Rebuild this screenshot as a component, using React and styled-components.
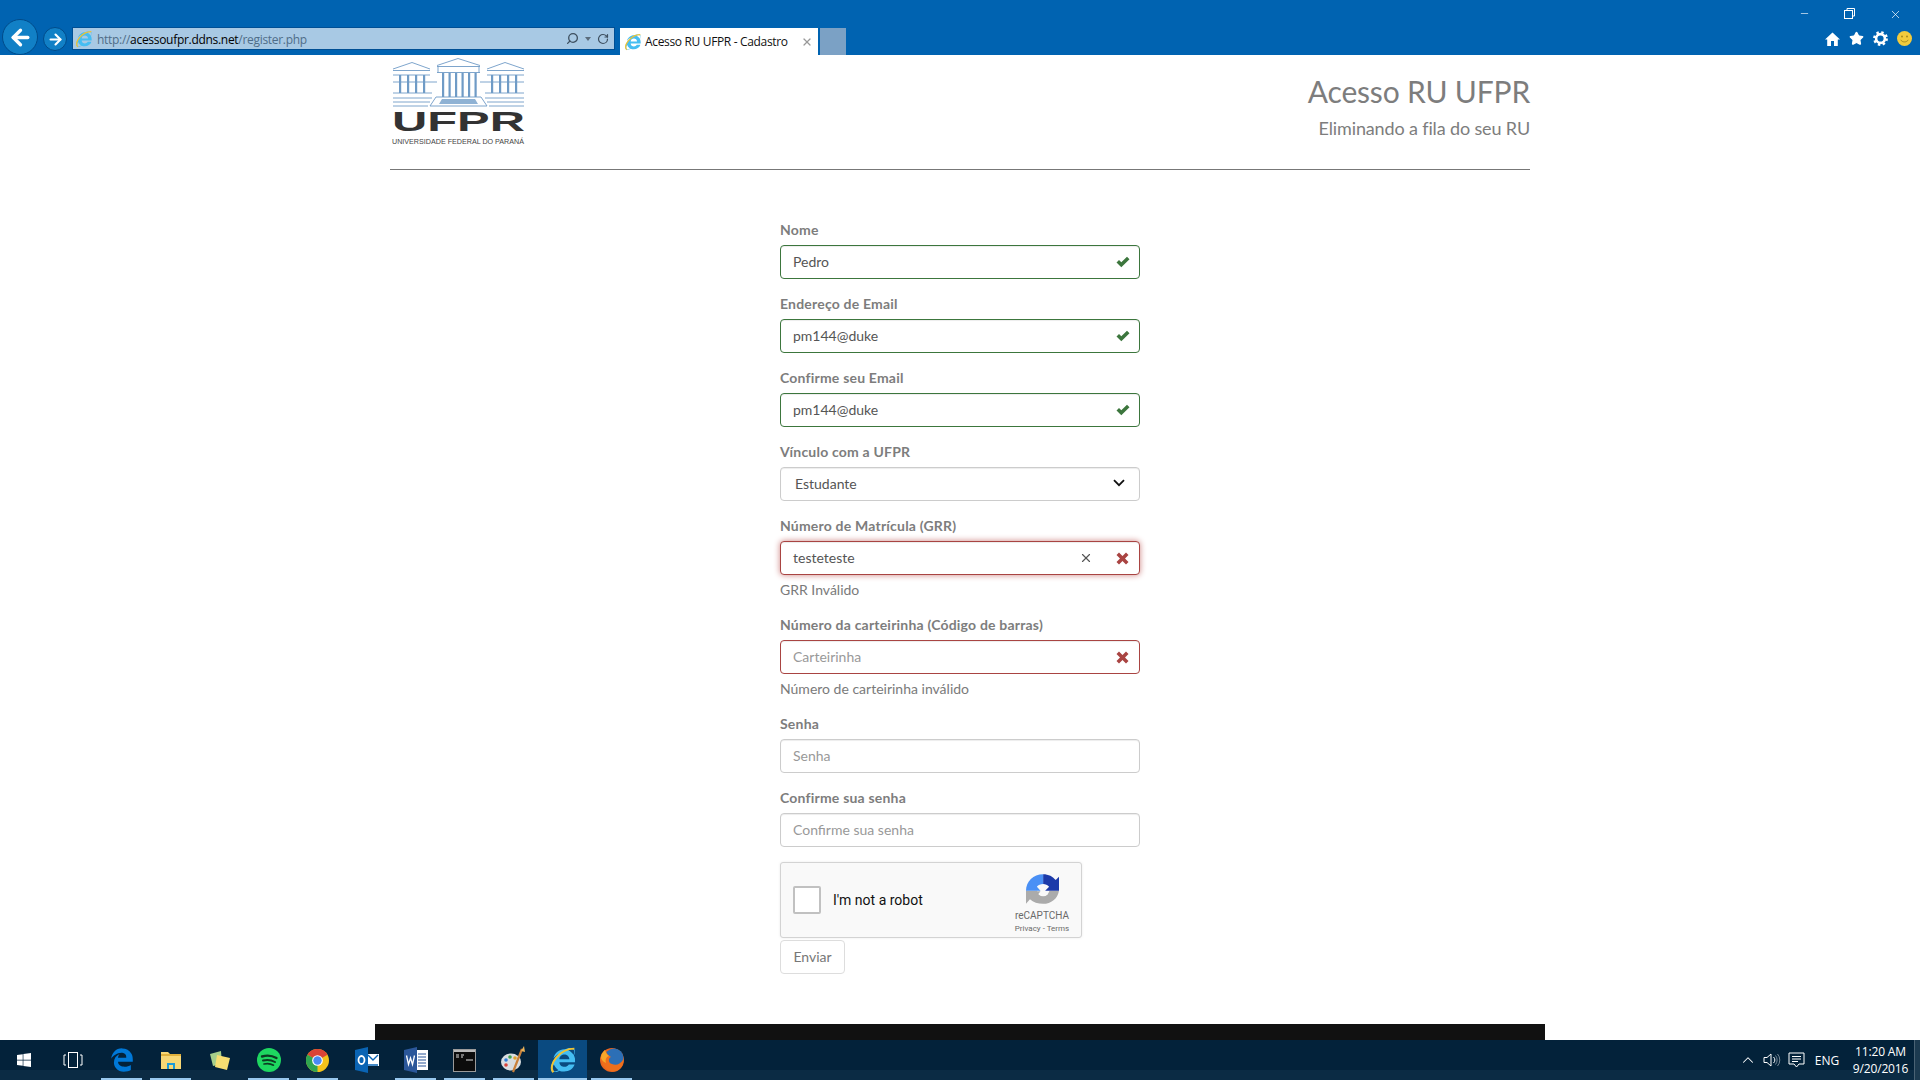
import React from "react"
import styled, { createGlobalStyle } from "styled-components"
import { ArrowLeft, ArrowRight, Search, RotateCw, ChevronUp, Star, X, Minus } from "lucide-react"
import { FaEdgeLegacy, FaInternetExplorer, FaWindows } from "react-icons/fa"

const GlobalStyle = createGlobalStyle`
  html, body {
    margin: 0;
    padding: 0;
    background: #fff;
    overflow: hidden;
  }
  * {
    box-sizing: border-box;
  }
`

const Screen = styled.div`
  width: 1920px;
  height: 1080px;
  display: flex;
  flex-direction: column;
  overflow: hidden;
  font-family: Lato, "Liberation Sans", sans-serif;
  font-size: 14px;
  color: #555;
`

const Chrome = styled.div`
  height: 55px;
  flex: none;
  display: flex;
  align-items: flex-end;
  background: #0063b1;
  padding-left: 2px;
  font-family: "Open Sans", "Liberation Sans", sans-serif;
  font-size: 12px;
`

const NavButton = styled.div`
  flex: none;
  width: ${(props) => props.$size}px;
  height: ${(props) => props.$size}px;
  margin: 0 ${(props) => props.$gap}px ${(props) => props.$bottom}px 0;
  border-radius: 50%;
  background: #1180c6;
  border: 1px solid #004b8a;
  color: #fff;
  display: flex;
  align-items: center;
  justify-content: center;
`

const AddressBar = styled.div`
  width: 543px;
  height: 23px;
  margin-bottom: 5px;
  flex: none;
  display: flex;
  align-items: center;
  gap: 3px;
  padding: 0 5px 0 2px;
  background: #a8c9e4;
  border: 1px solid #004f94;
  color: #4f6d88;
`

const Url = styled.span`
  flex: 1;
  margin: 1px 0 0 1px;
  white-space: nowrap;
  letter-spacing: -0.3px;
`

const Host = styled.span`
  color: #000;
`

const BarIcon = styled.span`
  display: flex;
  color: #3d4f5f;
`

const Caret = styled.span`
  width: 0;
  height: 0;
  margin: 0 3px;
  border-left: 3px solid transparent;
  border-right: 3px solid transparent;
  border-top: 4px solid #5a6c7c;
`

const Tab = styled.div`
  width: 198px;
  height: 27px;
  margin-left: 5px;
  flex: none;
  display: flex;
  align-items: center;
  gap: 3px;
  padding: 0 5px 0 4px;
  background: #fff;
  color: #111;
  white-space: nowrap;
`

const TabTitle = styled.span`
  flex: 1;
  letter-spacing: -0.34px;
`

const NewTab = styled.div`
  width: 26px;
  height: 27px;
  margin-left: 2px;
  flex: none;
  background: #7ba1c5;
`

const RightTools = styled.div`
  margin-left: auto;
  align-self: stretch;
  width: 136px;
  flex: none;
  display: flex;
  flex-direction: column;
  justify-content: space-between;
  padding: 8px 8px 9px 0;
`

const WindowRow = styled.div`
  display: flex;
  justify-content: flex-end;
  gap: 34px;
  padding-right: 10px;
  color: #fff;
`

const ToolRow = styled.div`
  display: flex;
  justify-content: flex-end;
  align-items: center;
  gap: 9px;
  color: #fff;
`

const Page = styled.div`
  flex: 1;
  min-height: 0;
  width: 1170px;
  margin: 0 auto;
  display: flex;
  flex-direction: column;
`

const Content = styled.div`
  flex: 1;
  padding: 0 15px;
`

const Header = styled.header`
  height: 115px;
  display: flex;
  justify-content: space-between;
  padding-left: 2px;
  border-bottom: 1px solid #777;
`

const LogoWrap = styled.svg`
  width: 133px;
  height: 90px;
  margin-top: 2px;
`

const Titles = styled.div`
  text-align: right;
  color: #7d7d7d;
`

const Title = styled.div`
  font-size: 30px;
  line-height: 33px;
  margin-top: 20px;
  letter-spacing: -0.18px;
`

const Subtitle = styled.div`
  font-size: 18px;
  line-height: 20px;
  margin-top: 10px;
  letter-spacing: -0.14px;
`

const Form = styled.form`
  width: 360px;
  margin: 50px auto 0;
`

const Group = styled.div`
  margin-bottom: 15px;
`

const Label = styled.label`
  display: block;
  height: 20px;
  line-height: 20px;
  margin-bottom: 5px;
  font-weight: 700;
  letter-spacing: 0.2px;
  color: #7d7d7d;
`

const borderColors = {
  ok: "#3c763d",
  error: "#a94442",
  focus: "#a94442",
  none: "#ccc",
}

const Field = styled.div`
  height: 34px;
  display: flex;
  align-items: center;
  padding: 0 ${(props) => (props.$select ? "14px 0 13px" : "9px 0 12px")};
  background: #fff;
  border: 1px solid ${(props) => borderColors[props.$state || "none"]};
  border-radius: 4px;
  box-shadow: ${(props) =>
    props.$state === "focus"
      ? "inset 0 1px 1px rgba(0,0,0,.075), 0 0 6px #ce8483"
      : "inset 0 1px 1px rgba(0,0,0,.075)"};
`

const FieldText = styled.span`
  flex: 1;
  margin-top: -2px;
  color: ${(props) => (props.$placeholder ? "#999" : "#555")};
  padding-left: ${(props) => (props.$select ? "1px" : "0")};
`

const ClearButton = styled.span`
  display: flex;
  margin-right: 23px;
  color: #555;
`

const Help = styled.div`
  height: 20px;
  line-height: 20px;
  margin-top: 5px;
  color: #7a7a7a;
`

const Captcha = styled.div`
  width: 302px;
  height: 76px;
  display: flex;
  align-items: center;
  padding-left: 12px;
  background: #f9f9f9;
  border: 1px solid #d3d3d3;
  border-radius: 3px;
  box-shadow: 0 0 3px rgba(0, 0, 0, 0.08);
  font-family: Roboto, "Liberation Sans", sans-serif;
  color: #111;
`

const CaptchaBox = styled.span`
  width: 28px;
  height: 28px;
  flex: none;
  background: #fff;
  border: 2px solid #c1c1c1;
  border-radius: 2px;
`

const CaptchaText = styled.span`
  margin-left: 12px;
  flex: 1;
`

const CaptchaBrand = styled.div`
  width: 70px;
  margin-right: 4px;
  padding-top: 6px;
  display: flex;
  flex-direction: column;
  align-items: center;
  color: #6a6a6a;
  font-size: 10px;
`

const CaptchaName = styled.span`
  margin-top: 6px;
`

const CaptchaLinks = styled.span`
  font-size: 8px;
  margin-top: 3px;
`

const SendButton = styled.button`
  display: block;
  width: 65px;
  height: 34px;
  margin-top: 2px;
  padding: 0 0 2px;
  background: #fff;
  border: 1px solid #ddd;
  border-radius: 4px;
  font-family: inherit;
  font-size: 14px;
  color: #777;
`

const Footer = styled.footer`
  height: 16px;
  flex: none;
  background: #111;
`

const Taskbar = styled.div`
  height: 40px;
  flex: none;
  display: flex;
  align-items: stretch;
  background: linear-gradient(to bottom, #03223a 0, #03223a 30px, #0b2b44 30px, #0b2b44 100%);
  color: #fff;
`

const TaskItem = styled.div`
  width: ${(props) => props.$width || 49}px;
  flex: none;
  position: relative;
  display: flex;
  align-items: center;
  justify-content: center;
  background: ${(props) => (props.$active ? "#0a4a80" : "transparent")};

  &::after {
    content: "";
    display: ${(props) => (props.$running ? "block" : "none")};
    position: absolute;
    left: ${(props) => (props.$active ? 0 : "4px")};
    right: ${(props) => (props.$active ? 0 : "4px")};
    bottom: 0;
    height: 2px;
    background: #99c8ee;
  }
`

const Tray = styled.div`
  margin-left: auto;
  display: flex;
  align-items: center;
  font-family: "Open Sans", "Liberation Sans", sans-serif;
  font-size: 12px;
  color: #fff;
`

const TrayIcon = styled.span`
  width: ${(props) => props.$width}px;
  display: flex;
  justify-content: center;
`

const Lang = styled.span`
  width: 38px;
  text-align: center;
`

const Clock = styled.div`
  width: 67px;
  margin-left: 1px;
  text-align: center;
  line-height: 17px;
  letter-spacing: -0.15px;
`

const ShowDesktop = styled.div`
  width: 6px;
  align-self: stretch;
  background: #1c3a50;
  border-left: 1px solid #4a6274;
`

// glyphicon-ok do bootstrap
const OkIcon = () => (
  <svg width="14" height="12" viewBox="0 0 14 12">
    <path d="M0.5 6.5 L3 4 L5.3 6.3 L11 0.8 L13.5 3.2 L5.3 11.2 Z" fill="#3c763d" />
  </svg>
)

// glyphicon-remove do bootstrap
const ErrorIcon = () => (
  <svg width="13" height="13" viewBox="0 0 13 13" style={{ marginRight: 1 }}>
    <path
      d="M0.5 3 L3 0.5 L6.5 4 L10 0.5 L12.5 3 L9 6.5 L12.5 10 L10 12.5 L6.5 9 L3 12.5 L0.5 10 L4 6.5 Z"
      fill="#a94442"
    />
  </svg>
)

const SelectArrow = () => (
  <svg width="12" height="8" viewBox="0 0 12 8" style={{ marginTop: -2 }}>
    <path d="M1 1.2 L6 6.2 L11 1.2" fill="none" stroke="#111" strokeWidth="1.8" />
  </svg>
)

const IeIcon = ({ size = 18 }) => (
  <svg width={size} height={size} viewBox="0 0 32 32">
    <foreignObject x="2" y="2" width="28" height="28">
      <IeGlyph />
    </foreignObject>
    <path d="M5 30 C-2 22 12 3 29 3" fill="none" stroke="#f2c230" strokeWidth="2.2" />
  </svg>
)

function IeGlyph() {
  return <FaInternetExplorer size={28} color="#45bdf2" />
}

const HomeIcon = () => (
  <svg width="15" height="14" viewBox="0 0 15 14">
    <path d="M7.5 0.5 L15 7.5 H12.8 V14 H9 V9 H6 V14 H2.2 V7.5 H0 Z" fill="#fff" />
  </svg>
)

const GearIcon = () => (
  <svg width="15" height="15" viewBox="0 0 15 15">
    <circle cx="7.5" cy="7.5" r="4.4" fill="none" stroke="#fff" strokeWidth="2.6" />
    <circle cx="7.5" cy="7.5" r="6.2" fill="none" stroke="#fff" strokeWidth="2.4" strokeDasharray="2.4 2.47" />
  </svg>
)

const SmileIcon = () => (
  <svg width="15" height="15" viewBox="0 0 15 15">
    <circle cx="7.5" cy="7.5" r="7.5" fill="#f2cb3d" />
    <circle cx="5" cy="5.5" r="1" fill="#a88a1d" />
    <circle cx="10" cy="5.5" r="1" fill="#a88a1d" />
    <path d="M3.8 8.8 C5 11.6 10 11.6 11.2 8.8" fill="none" stroke="#a88a1d" strokeWidth="1" />
  </svg>
)

const ColumnRow = ({ xs, y1, y2 }) =>
  xs.map((x) => (
    <rect key={x} x={x} y={y1} width="2.2" height={y2 - y1} fill="#6f9bc6" />
  ))

const Logo = () => (
  <LogoWrap viewBox="0 0 133 90">
    <g stroke="#6f9bc6" strokeWidth="0.9" fill="none">
      <path d="M1 12 L20 5.5 L38 12 M1 13.5 H38 M1 18 H38" />
      <path d="M95 12 L113 5.5 L132 12 M95 13.5 H132 M95 18 H132" />
      <path d="M45 8.5 L66 1.5 L88 8.5 M45 9.5 H88 M45 15.5 H88 M46 9.5 V15.5 M87 9.5 V15.5" />
      <path d="M1 25 H45 M88 25 H132 M1 36 H40 M93 36 H132 M1 41 H40 M93 41 H132 M1 45 H38 M95 45 H132 M1 49 H36 M97 49 H132" />
      <path d="M38 49 L44 40 H89 L95 49 Z" />
    </g>
    <ColumnRow xs={[7, 15, 23, 31, 99, 107, 115, 123]} y1={18} y2={36} />
    <ColumnRow xs={[50, 56.5, 63, 69.5, 76, 82.5]} y1={16} y2={40} />
    <path d="M47 47 H86 L83 42 H50 Z" fill="#8fb2d4" />
    <text
      x="0"
      y="74"
      fontFamily="Liberation Sans, sans-serif"
      fontWeight="700"
      fontSize="28"
      fill="#333"
      textLength="133"
      lengthAdjust="spacingAndGlyphs"
    >
      UFPR
    </text>
    <text
      x="0"
      y="87"
      fontFamily="Liberation Sans, sans-serif"
      fontSize="6.6"
      fill="#444"
      textLength="132"
      lengthAdjust="spacingAndGlyphs"
    >
      UNIVERSIDADE FEDERAL DO PARANÁ
    </text>
  </LogoWrap>
)

const RecaptchaLogo = () => (
  <svg width="33" height="30" viewBox="0 0 100 90">
    <path d="M0 50 V90 L12 76 C22 85 36 90 52 90 C76 90 96 74 100 50 Z" fill="#ababab" />
    <circle cx="52" cy="48" r="19" fill="#f9f9f9" />
    <path d="M28 52 H44 L36 62 Z" fill="#ababab" />
    <path d="M0 50 C0 22 22 0 52 0 V30 C44 30 37 33 33 38 L44 50 Z" fill="#4a90f5" />
    <path d="M52 0 C68 0 82 7 90 18 L100 8 V50 H58 L70 38 C65 33 59 30 52 30 Z" fill="#1c3aa9" />
  </svg>
)

const ExplorerIcon = () => (
  <svg width="22" height="22" viewBox="0 0 22 22">
    <path d="M1 3 H8 L10 5 H21 V20 H1 Z" fill="#f8d775" />
    <rect x="1" y="5" width="20" height="2" fill="#e0b03c" />
    <path d="M7 14 H15 V20 H13 V16 H9 V20 H7 Z" fill="#1d9bd8" />
  </svg>
)

const NotesIcon = () => (
  <svg width="26" height="24" viewBox="0 0 26 24">
    <path d="M3 6 L14 3 L15 16 L6 18 Z" fill="#a6cf8a" />
    <path d="M10 7 L23 10 L20 22 L8 19 Z" fill="#f7de72" />
  </svg>
)

const SpotifyIcon = () => (
  <svg width="24" height="24" viewBox="0 0 24 24">
    <circle cx="12" cy="12" r="12" fill="#1ed760" />
    <g fill="none" stroke="#0c3b22" strokeLinecap="round">
      <path d="M5 8.5 C10 7 15 7.5 19.5 10" strokeWidth="2.4" />
      <path d="M6 12.5 C10 11.5 14.5 12 18 14" strokeWidth="2" />
      <path d="M7 16 C10.5 15.2 14 15.7 16.5 17.2" strokeWidth="1.6" />
    </g>
  </svg>
)

const ChromeIcon = () => (
  <svg width="23" height="23" viewBox="0 0 24 24">
    <circle cx="12" cy="12" r="12" fill="#f3c21a" />
    <path d="M12 12 L1.6 6 A12 12 0 0 1 22.4 6 Z" fill="#db4437" />
    <path d="M12 12 L1.6 6 A12 12 0 0 0 12 24 Z" fill="#2fa550" />
    <circle cx="12" cy="12" r="5.6" fill="#fff" />
    <circle cx="12" cy="12" r="4.4" fill="#4a8af4" />
  </svg>
)

const OutlookIcon = () => (
  <svg width="24" height="26" viewBox="0 0 24 26">
    <rect x="12" y="7" width="12" height="12" fill="#fff" />
    <path d="M13 8 L18 13 L23 8 M13 18 L23 18" fill="none" stroke="#0a64b4" strokeWidth="1.4" />
    <path d="M0 3 L13 0 V26 L0 23 Z" fill="#0a64b4" />
    <ellipse cx="6.5" cy="13" rx="3" ry="4" fill="none" stroke="#fff" strokeWidth="1.8" />
  </svg>
)

const WordIcon = () => (
  <svg width="24" height="26" viewBox="0 0 24 26">
    <rect x="10" y="3" width="14" height="20" fill="#fff" />
    <path d="M14 7 H22 M14 10 H22 M14 13 H22 M14 16 H22 M14 19 H22" stroke="#2b579a" strokeWidth="1.2" />
    <path d="M0 3 L13 0 V26 L0 23 Z" fill="#2b579a" />
    <path d="M2.5 8.5 L4.5 17.5 L6.5 11 L8.5 17.5 L10.5 8.5" fill="none" stroke="#fff" strokeWidth="1.3" />
  </svg>
)

const ConsoleIcon = () => (
  <svg width="23" height="23" viewBox="0 0 23 23">
    <rect x="0.5" y="0.5" width="22" height="22" fill="#0c0c0c" stroke="#9a9a9a" />
    <rect x="1" y="1" width="21" height="2" fill="#b9b9b9" />
    <path d="M3 6 H6 M3 8 H6 M8 6 H11 M8 8 H10 M13 11 H20" stroke="#ddd" strokeWidth="1.2" />
  </svg>
)

const PaintIcon = () => (
  <svg width="25" height="28" viewBox="0 0 25 28">
    <ellipse cx="10" cy="16" rx="10" ry="8.5" fill="#d9dde0" />
    <circle cx="5" cy="14" r="1.8" fill="#2f7ed8" />
    <circle cx="9" cy="11" r="1.8" fill="#3fa34d" />
    <circle cx="14" cy="12" r="1.8" fill="#e0a32e" />
    <circle cx="5" cy="19" r="1.8" fill="#d8433a" />
    <path d="M12 26 L21 3" stroke="#c9803a" strokeWidth="2.2" />
    <path d="M20 5 L23 0 L24 6 Z" fill="#e8b25a" />
  </svg>
)

const FirefoxIcon = () => (
  <svg width="24" height="24" viewBox="0 0 24 24">
    <circle cx="12" cy="12" r="12" fill="#e8641d" />
    <circle cx="14" cy="10" r="9.5" fill="#2c6fb6" />
    <path d="M1 8 C0 18 8 24 14 23.5 C20 23 24 17 23.5 11 C21 16 16 18 12 16 C8 15 8 10 11 9 C8 7 6 5 5 2 C3 4 2 6 1 8 Z" fill="#ee6f1c" />
    <path d="M1 10 C1 6 3 4 5 2 C6 5 7 7 9 8 C6 9 5 12 6 15 C3 14 2 12 1 10 Z" fill="#f6a72a" />
  </svg>
)

const TaskViewIcon = () => (
  <svg width="20" height="16" viewBox="0 0 20 16">
    <path d="M3 3 H1 V13 H3 M17 3 H19 V13 H17" fill="none" stroke="#fff" />
    <rect x="5.5" y="0.5" width="9" height="15" fill="none" stroke="#fff" />
  </svg>
)

const SpeakerIcon = () => (
  <svg width="18" height="16" viewBox="0 0 18 16">
    <path d="M1 5.5 H4 L8 2 V14 L4 10.5 H1 Z" fill="none" stroke="#fff" />
    <path d="M10.5 5 A4 4 0 0 1 10.5 11" fill="none" stroke="#fff" />
    <path d="M12.5 3.5 A7 7 0 0 1 12.5 12.5 M14.5 2 A9 9 0 0 1 14.5 14" fill="none" stroke="#778896" />
  </svg>
)

const NotificationIcon = () => (
  <svg width="17" height="16" viewBox="0 0 17 16">
    <path d="M1 1 H16 V12 H11 L8.5 15 L6 12 H1 Z" fill="none" stroke="#fff" />
    <path d="M4 4.5 H13 M4 7 H13 M4 9.5 H10" stroke="#fff" />
  </svg>
)

const RestoreIcon = () => (
  <svg width="11" height="11" viewBox="0 0 11 11">
    <path d="M3 2.5 V0.5 H10.5 V8 H8.5" fill="none" stroke="#fff" />
    <rect x="0.5" y="2.5" width="8" height="8" fill="none" stroke="#fff" />
  </svg>
)

const fields = [
  { label: "Nome", value: "Pedro", state: "ok" },
  { label: "Endereço de Email", value: "pm144@duke", state: "ok" },
  { label: "Confirme seu Email", value: "pm144@duke", state: "ok" },
  { label: "Vínculo com a UFPR", value: "Estudante", select: true },
  {
    label: "Número de Matrícula (GRR)",
    value: "testeteste",
    state: "focus",
    clear: true,
    help: "GRR Inválido",
  },
  {
    label: "Número da carteirinha (Código de barras)",
    placeholder: "Carteirinha",
    state: "error",
    help: "Número de carteirinha inválido",
  },
  { label: "Senha", placeholder: "Senha" },
  { label: "Confirme sua senha", placeholder: "Confirme sua senha" },
]

const FormField = ({ label, value, placeholder, state, select, clear, help }) => (
  <Group>
    <Label>{label}</Label>
    <Field $state={state} $select={select}>
      <FieldText $placeholder={!value} $select={select}>
        {value || placeholder}
      </FieldText>
      {clear && (
        <ClearButton>
          <X size={14} strokeWidth={2} />
        </ClearButton>
      )}
      {state === "ok" && <OkIcon />}
      {(state === "error" || state === "focus") && <ErrorIcon />}
      {select && <SelectArrow />}
    </Field>
    {help && <Help>{help}</Help>}
  </Group>
)

const App = () => (
  <Screen>
    <GlobalStyle />
    <Chrome>
      <NavButton $size={36} $gap={5} $bottom={0}>
        <ArrowLeft size={25} strokeWidth={3.2} />
      </NavButton>
      <NavButton $size={24} $gap={5} $bottom={4}>
        <ArrowRight size={17} strokeWidth={3} />
      </NavButton>
      <AddressBar>
        <IeIcon />
        <Url>
          http://<Host>acessoufpr.ddns.net</Host>/register.php
        </Url>
        <BarIcon>
          <Search size={13} strokeWidth={2.4} style={{ transform: "scaleX(-1)" }} />
        </BarIcon>
        <Caret />
        <BarIcon>
          <RotateCw size={12} strokeWidth={2.4} />
        </BarIcon>
      </AddressBar>
      <Tab>
        <IeIcon />
        <TabTitle>Acesso RU UFPR - Cadastro</TabTitle>
        <X size={12} strokeWidth={2.4} color="#999" />
      </Tab>
      <NewTab />
      <RightTools>
        <WindowRow>
          <Minus size={11} strokeWidth={1.4} />
          <RestoreIcon />
          <X size={13} strokeWidth={1.3} />
        </WindowRow>
        <ToolRow>
          <HomeIcon />
          <Star size={15} fill="#fff" strokeWidth={2} />
          <GearIcon />
          <SmileIcon />
        </ToolRow>
      </RightTools>
    </Chrome>
    <Page>
      <Content>
        <Header>
          <Logo />
          <Titles>
            <Title>Acesso RU UFPR</Title>
            <Subtitle>Eliminando a fila do seu RU</Subtitle>
          </Titles>
        </Header>
        <Form>
          {fields.map((field) => (
            <FormField key={field.label} {...field} />
          ))}
          <Captcha>
            <CaptchaBox />
            <CaptchaText>I'm not a robot</CaptchaText>
            <CaptchaBrand>
              <RecaptchaLogo />
              <CaptchaName>reCAPTCHA</CaptchaName>
              <CaptchaLinks>Privacy - Terms</CaptchaLinks>
            </CaptchaBrand>
          </Captcha>
          <SendButton type="button">Enviar</SendButton>
        </Form>
      </Content>
      <Footer />
    </Page>
    <Taskbar>
      <TaskItem $width={48}>
        <FaWindows size={16} color="#fff" />
      </TaskItem>
      <TaskItem $width={49}>
        <TaskViewIcon />
      </TaskItem>
      <TaskItem $running>
        <FaEdgeLegacy size={24} color="#0078d7" />
      </TaskItem>
      <TaskItem $running>
        <ExplorerIcon />
      </TaskItem>
      <TaskItem>
        <NotesIcon />
      </TaskItem>
      <TaskItem $running>
        <SpotifyIcon />
      </TaskItem>
      <TaskItem $running>
        <ChromeIcon />
      </TaskItem>
      <TaskItem>
        <OutlookIcon />
      </TaskItem>
      <TaskItem $running>
        <WordIcon />
      </TaskItem>
      <TaskItem $running>
        <ConsoleIcon />
      </TaskItem>
      <TaskItem $running>
        <PaintIcon />
      </TaskItem>
      <TaskItem $running $active>
        <IeIcon size={28} />
      </TaskItem>
      <TaskItem $running>
        <FirefoxIcon />
      </TaskItem>
      <Tray>
        <TrayIcon $width={24}>
          <ChevronUp size={18} strokeWidth={1.4} />
        </TrayIcon>
        <TrayIcon $width={24}>
          <SpeakerIcon />
        </TrayIcon>
        <TrayIcon $width={24}>
          <NotificationIcon />
        </TrayIcon>
        <Lang>ENG</Lang>
        <Clock>
          11:20 AM
          <br />
          9/20/2016
        </Clock>
        <ShowDesktop />
      </Tray>
    </Taskbar>
  </Screen>
)

export default App
